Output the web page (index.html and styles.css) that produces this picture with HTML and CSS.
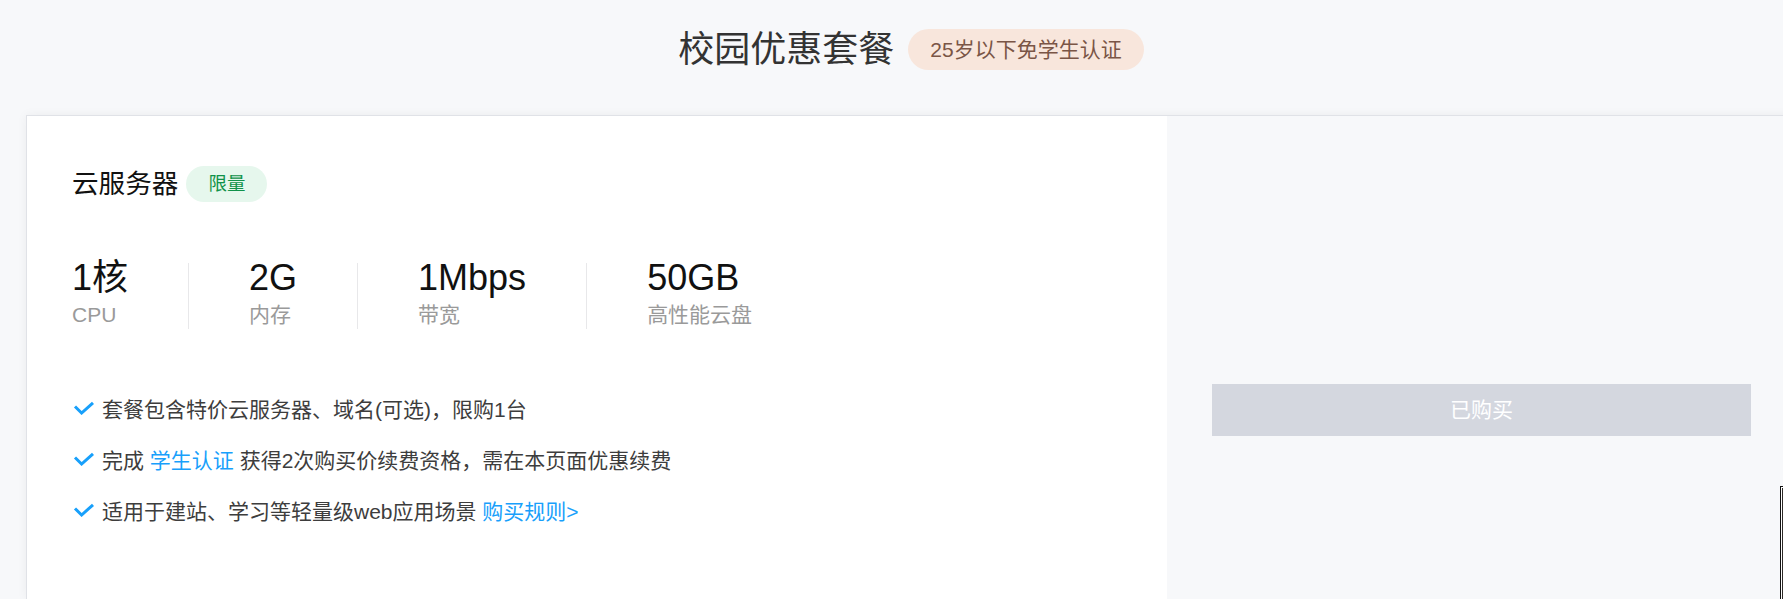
FILE: index.html
```html
<!DOCTYPE html>
<html lang="zh-CN">
<head>
<meta charset="utf-8">
<title>校园优惠套餐</title>
<link rel="stylesheet" href="styles.css">
</head>
<body>
<div class="page">
  <div class="heading">
    <h1 class="heading-title">校园优惠套餐</h1>
    <span class="heading-badge">25岁以下免学生认证</span>
  </div>
  <div class="card">
    <div class="card-main">
      <div class="product">
        <span class="product-name">云服务器</span>
        <span class="product-tag">限量</span>
      </div>
      <div class="specs">
        <div class="spec"><div class="spec-val">1核</div><div class="spec-label">CPU</div></div>
        <div class="spec"><div class="spec-val">2G</div><div class="spec-label">内存</div></div>
        <div class="spec"><div class="spec-val">1Mbps</div><div class="spec-label">带宽</div></div>
        <div class="spec"><div class="spec-val">50GB</div><div class="spec-label">高性能云盘</div></div>
      </div>
      <ul class="features">
        <li class="feature"><svg class="check" viewBox="0 0 22 14" width="22" height="14"><path d="M3 5.5 L9.6 12 L21 1.8" fill="none" stroke="#18a0fb" stroke-width="3"/></svg><span>套餐包含特价云服务器、域名(可选)，限购1台</span></li>
        <li class="feature"><svg class="check" viewBox="0 0 22 14" width="22" height="14"><path d="M3 5.5 L9.6 12 L21 1.8" fill="none" stroke="#18a0fb" stroke-width="3"/></svg><span>完成 <a class="link">学生认证</a> 获得2次购买价续费资格，需在本页面优惠续费</span></li>
        <li class="feature"><svg class="check" viewBox="0 0 22 14" width="22" height="14"><path d="M3 5.5 L9.6 12 L21 1.8" fill="none" stroke="#18a0fb" stroke-width="3"/></svg><span>适用于建站、学习等轻量级web应用场景 <a class="link">购买规则&gt;</a></span></li>
      </ul>
    </div>
    <div class="card-side">
      <div class="buy-btn">已购买</div>
    </div>
  </div>
</div>
<div class="edge-widget"></div>
</body>
</html>
```

FILE: styles.css
```css
* { box-sizing: border-box; }
html, body {
  margin: 0;
  padding: 0;
  background: #f7f8fa;
  overflow: hidden;
  height: 599px;
}
body {
  font-family: "Liberation Sans", "Noto Sans CJK SC", sans-serif;
  color: #333;
}
.page {
  width: 1770px;
  margin-left: 26px;
}
.heading {
  display: flex;
  justify-content: center;
  align-items: center;
  height: 41px;
  margin-top: 29px;
}
.heading-title {
  margin: 0;
  font-size: 36px;
  font-weight: normal;
  line-height: 41px;
  color: #333;
}
.heading-badge {
  margin-left: 14px;
  height: 41px;
  line-height: 41px;
  padding: 0 22px;
  border-radius: 21px;
  background: #f8e6dc;
  color: #7a5546;
  font-size: 21px;
}
.card {
  margin-top: 45px;
  display: flex;
  border: 1px solid #e0e2e7;
  border-bottom: none;
  box-shadow: 0 0 10px rgba(0, 0, 0, 0.05);
  height: 484px;
}
.card-main {
  width: 1140px;
  background: #fff;
  padding: 50px 45px 0 45px;
}
.product {
  display: flex;
  align-items: center;
  height: 36px;
}
.product-name {
  font-size: 26.6px;
  color: #111;
  line-height: 36px;
}
.product-tag {
  margin-left: 8px;
  height: 36px;
  line-height: 36px;
  padding: 0 22px;
  border-radius: 18px;
  background: #e6f7ed;
  color: #11924a;
  font-size: 18.5px;
}
.specs {
  display: flex;
  margin-top: 61px;
}
.spec {
  padding: 0 60px;
  border-right: 1px solid #e8e8ea;
  height: 66px;
}
.spec:first-child { padding-left: 0; }
.spec:last-child { border-right: none; }
.spec-val {
  font-size: 36px;
  line-height: 29px;
  color: #111;
  white-space: nowrap;
}
.spec-label {
  margin-top: 10px;
  font-size: 21px;
  line-height: 26px;
  color: #9a9a9a;
  white-space: nowrap;
}
.features {
  list-style: none;
  margin: 53px 0 0 0;
  padding: 0;
}
.feature {
  display: flex;
  align-items: center;
  height: 51px;
  font-size: 21px;
  color: #3d3d3d;
  white-space: nowrap;
}
.check {
  flex: none;
  margin-right: 8px;
}
.link {
  color: #18a0fb;
  text-decoration: none;
}
.card-side {
  flex: 1;
  background: #f7f8fa;
  padding: 268px 44px 0 45px;
}
.buy-btn {
  height: 52px;
  line-height: 52px;
  background: #d4d7df;
  color: #fff;
  text-align: center;
  font-size: 21px;
}
.edge-widget {
  position: absolute;
  left: 1780px;
  top: 486px;
  width: 20px;
  height: 113px;
  border: 1px solid #111;
  border-bottom: none;
  box-shadow: inset 1px 1px 0 #fff;
  background: #2d2a27;
}
```
